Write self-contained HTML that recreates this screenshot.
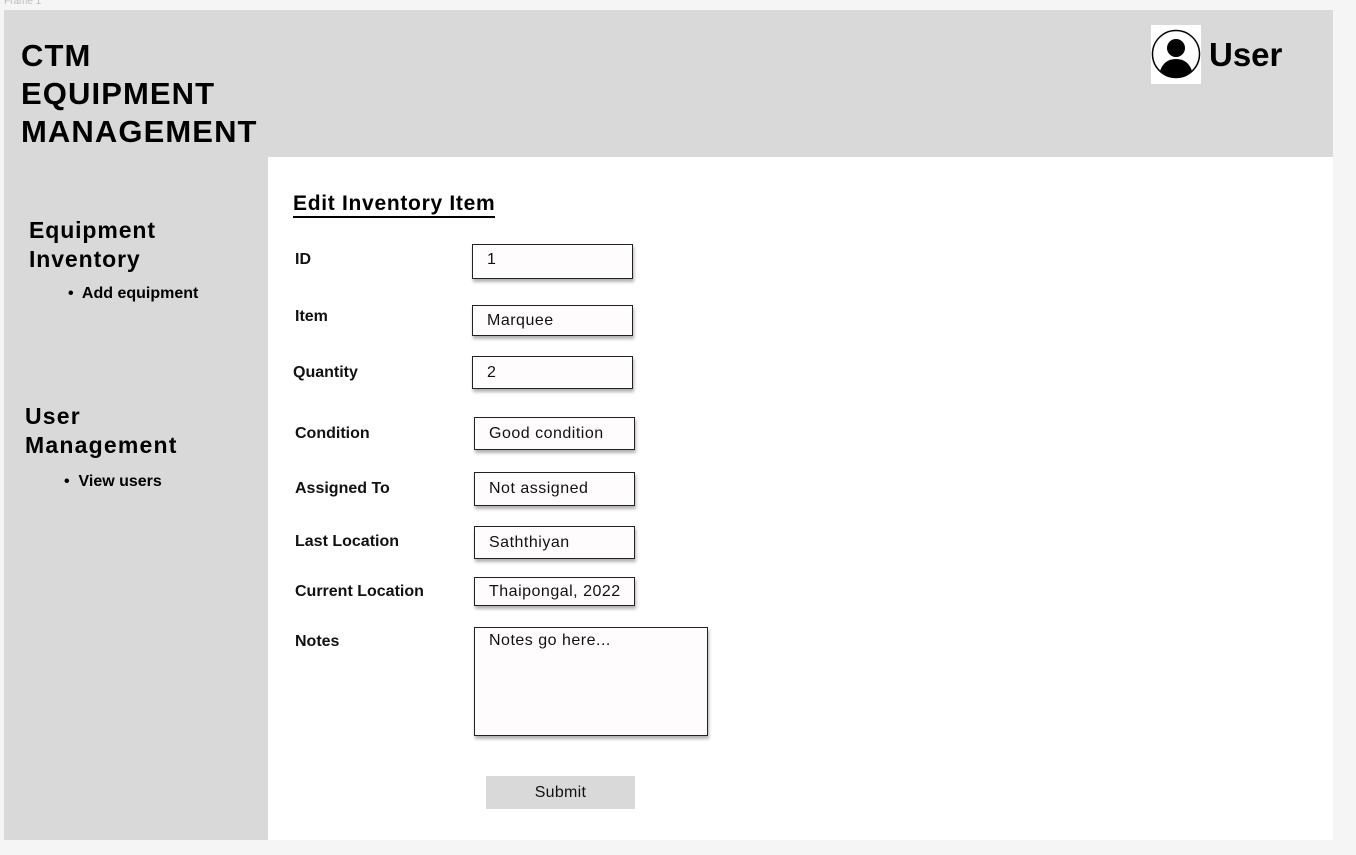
<!DOCTYPE html>
<html><head><meta charset="utf-8"><style>
*{margin:0;padding:0;box-sizing:border-box}
body{width:1356px;height:855px;background:#f5f5f5;font-family:"Liberation Sans",sans-serif;color:#000;position:relative;overflow:hidden}
.a{position:absolute}
.frame{left:4px;top:10px;width:1329px;height:830px;background:#d9d9d9}
.main{left:268px;top:157px;width:1065px;height:683px;background:#fff}
.lbl{font-size:16px;font-weight:bold;color:#111}
.box{background:#fffcfd;border:1px solid #222;box-shadow:1px 3px 3px rgba(0,0,0,.3);font-size:16px;letter-spacing:0.5px;padding-left:14px;color:#111}
</style></head><body>
<div class="a" style="left:4px;top:-4px;font-size:10px;color:#bbb">Frame 1</div>
<div class="a frame"></div>
<div class="a main"></div>
<div class="a" style="left:21px;top:37px;font-size:31px;line-height:38px;font-weight:bold;letter-spacing:1.1px">CTM<br>EQUIPMENT<br>MANAGEMENT</div>
<div class="a" style="left:1151px;top:25px;width:50px;height:59px;background:#fff"></div>
<svg class="a" style="left:1151px;top:29px" width="50" height="50" viewBox="0 0 50 50">
<circle cx="25" cy="25" r="23.5" fill="none" stroke="#000" stroke-width="1.5"/>
<circle cx="25" cy="19" r="9" fill="#000"/>
<path d="M9 42 Q13 30 25 30 Q37 30 41 42 Q34 48.5 25 48.5 Q16 48.5 9 42Z" fill="#000"/>
</svg>
<div class="a" style="left:1209px;top:36px;font-size:33px;font-weight:bold">User</div>
<div class="a" style="left:29px;top:216px;font-size:23px;line-height:29px;font-weight:bold;letter-spacing:0.9px">Equipment<br>Inventory</div>
<div class="a" style="left:68px;top:285px;font-size:16px;font-weight:bold">•&nbsp; Add equipment</div>
<div class="a" style="left:25px;top:402px;font-size:23px;line-height:29px;font-weight:bold;letter-spacing:1.2px">User<br>Management</div>
<div class="a" style="left:64px;top:473px;font-size:16px;font-weight:bold">•&nbsp; View users</div>
<div class="a" style="left:293px;top:192px;font-size:21px;font-weight:bold;border-bottom:2px solid #000;line-height:24px;letter-spacing:0.7px">Edit Inventory Item</div>
<div class="a lbl" style="left:295px;top:251px">ID</div>
<div class="a lbl" style="left:295px;top:308px">Item</div>
<div class="a lbl" style="left:293px;top:364px">Quantity</div>
<div class="a lbl" style="left:295px;top:425px">Condition</div>
<div class="a lbl" style="left:295px;top:480px">Assigned To</div>
<div class="a lbl" style="left:295px;top:533px">Last Location</div>
<div class="a lbl" style="left:295px;top:583px">Current Location</div>
<div class="a lbl" style="left:295px;top:633px">Notes</div>
<div class="a box" style="left:472px;top:244px;width:161px;height:35px;line-height:30px">1</div>
<div class="a box" style="left:472px;top:305px;width:161px;height:31px;line-height:29px">Marquee</div>
<div class="a box" style="left:472px;top:356px;width:161px;height:33px;line-height:31px">2</div>
<div class="a box" style="left:474px;top:417px;width:161px;height:33px;line-height:31px">Good condition</div>
<div class="a box" style="left:474px;top:472px;width:161px;height:34px;line-height:32px">Not assigned</div>
<div class="a box" style="left:474px;top:526px;width:161px;height:33px;line-height:31px">Saththiyan</div>
<div class="a box" style="left:474px;top:577px;width:161px;height:29px;line-height:27px">Thaipongal, 2022</div>
<div class="a box" style="left:474px;top:627px;width:234px;height:109px;line-height:26px">Notes go here...</div>
<div class="a" style="left:486px;top:776px;width:149px;height:33px;background:#d9d9d9;text-align:center;line-height:33px;font-size:16px;letter-spacing:0.3px;color:#111">Submit</div>
</body></html>
